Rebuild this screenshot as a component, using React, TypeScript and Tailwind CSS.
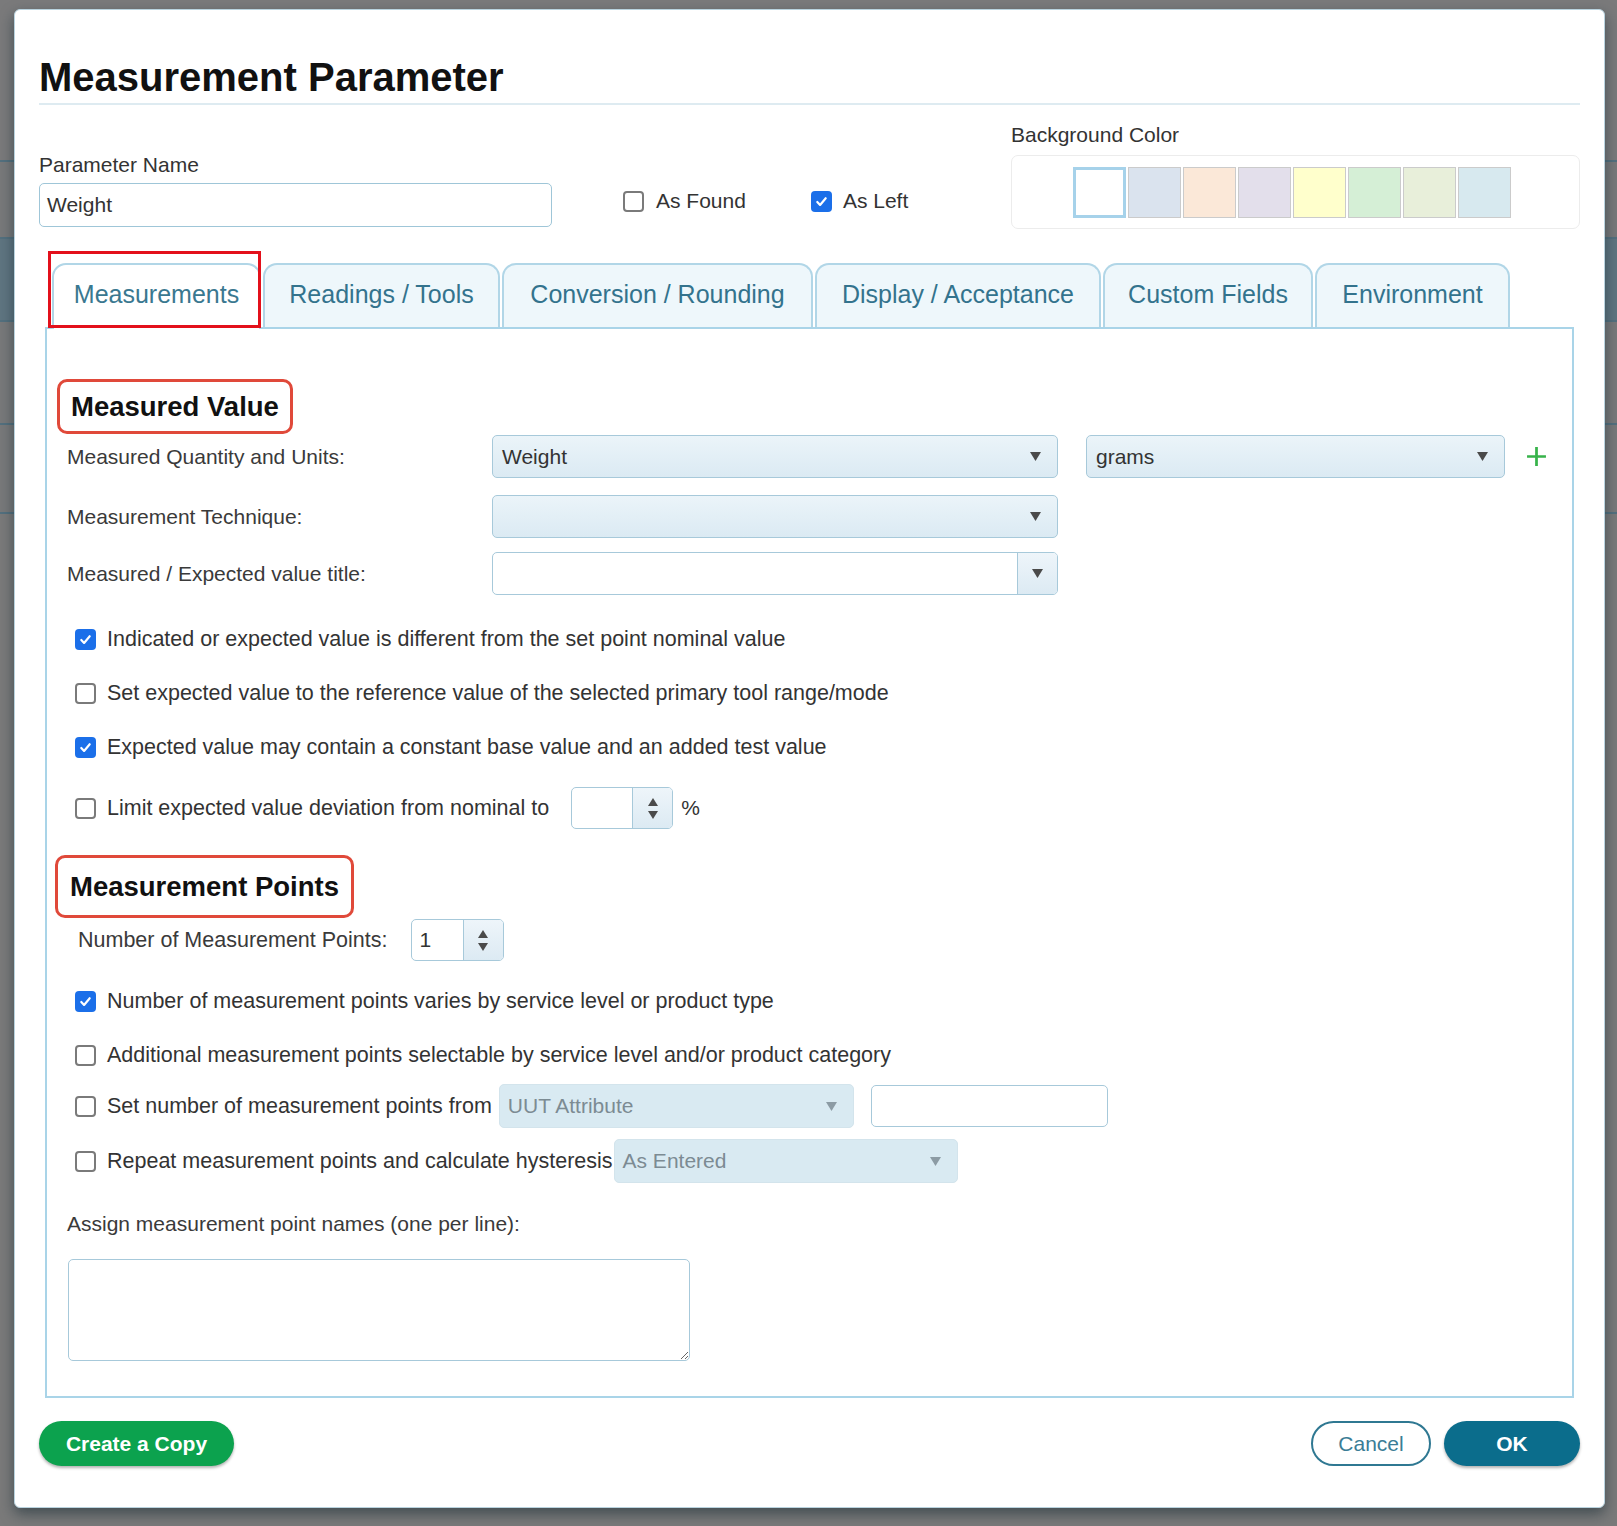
const swatches = ['#ffffff', '#dae3ee', '#fbe8d8', '#e3dfeb', '#ffffcc', '#d5efd6', '#e8efda', '#d7e9ef'];

const tabs = [
  { label: 'Measurements', w: 'w-[209px]', active: true },
  { label: 'Readings / Tools', w: 'w-[237px]' },
  { label: 'Conversion / Rounding', w: 'w-[311px]' },
  { label: 'Display / Acceptance', w: 'w-[286px]' },
  { label: 'Custom Fields', w: 'w-[210px]' },
  { label: 'Environment', w: 'w-[195px]' },
];

function Check({ checked }: { checked?: boolean }) {
  if (checked) {
    return (
      <span className="flex h-[21px] w-[21px] shrink-0 items-center justify-center rounded-[4px] bg-[#1b6fe9]">
        <svg viewBox="0 0 16 16" className="h-[15px] w-[15px]">
          <path d="M3.5 8.5l3 3.2 6-7.2" stroke="white" strokeWidth="2.3" fill="none" strokeLinecap="round" strokeLinejoin="round" />
        </svg>
      </span>
    );
  }
  return <span className="h-[21px] w-[21px] shrink-0 rounded-[4px] border-2 border-[#7a7a7a] bg-white" />;
}

function Arrow({ muted }: { muted?: boolean }) {
  return (
    <svg viewBox="0 0 10 8" className="h-[9px] w-[11px]">
      <path d="M0 0h10L5 8z" fill={muted ? '#8c9ba4' : '#4a4a4a'} />
    </svg>
  );
}

function Select({ value, w }: { value?: string; w: string }) {
  return (
    <div className={`flex h-[43px] ${w} items-center justify-between rounded-[5px] border border-[#a7c9da] bg-linear-to-b from-[#ebf4f9] to-[#dbeaf3] pl-[9px] pr-[16px] text-[#333]`}>
      <span>{value}</span>
      <Arrow />
    </div>
  );
}

function Spinner({ value, w }: { value?: string; w: string }) {
  return (
    <div className={`flex h-[42px] ${w} overflow-hidden rounded-[5px] border border-[#a7c9da] bg-white`}>
      <div className="flex flex-1 items-center pl-[8px] text-[#333]">{value}</div>
      <div className="flex w-[40px] flex-col items-center justify-center gap-[5px] border-l border-[#a7c9da] bg-linear-to-b from-[#eef5fa] to-[#dceaf3]">
        <svg viewBox="0 0 10 8" className="h-[8px] w-[10px]">
          <path d="M5 0l5 8H0z" fill="#4a4a4a" />
        </svg>
        <svg viewBox="0 0 10 8" className="h-[8px] w-[10px]">
          <path d="M0 0h10L5 8z" fill="#4a4a4a" />
        </svg>
      </div>
    </div>
  );
}

function CheckRow({ checked, label, className, children }: { checked?: boolean; label: string; className: string; children?: React.ReactNode }) {
  return (
    <div className={`flex items-center pl-[8px] ${className}`}>
      <Check checked={checked} />
      <span className="ml-[11px] text-[21.5px] text-[#333]">{label}</span>
      {children}
    </div>
  );
}

export default function App() {
  return (
    <div className="relative h-[1526px] w-[1617px] overflow-hidden bg-[#7a7a7a] font-['Liberation_Sans',Arial,sans-serif] text-[21px]">
      {/* page behind the modal overlay */}
      <div className="flex flex-col">
        <div className="h-[160px] bg-[#7a7a7b]" />
        <div className="h-[2px] bg-[#53707e]" />
        <div className="h-[75px] bg-[#78797a]" />
        <div className="h-[2px] bg-[#53707e]" />
        <div className="h-[81px] bg-[#5f7581]" />
        <div className="h-[2px] bg-[#53707e]" />
        <div className="h-[101px] bg-[#78797a]" />
        <div className="h-[2px] bg-[#53707e]" />
        <div className="h-[87px] bg-[#78797a]" />
        <div className="h-[2px] bg-[#53707e]" />
      </div>

      <div className="absolute left-[14px] top-[9px] w-[1591px] rounded-[6px] border border-[#b9d3df] bg-white px-[24px] pb-[41px] pt-[43px] shadow-[0_6px_14px_rgba(20,40,50,0.55)]">
        <h1 className="text-[40px] font-bold leading-[48px] text-[#111]">Measurement Parameter</h1>
        <div className="mt-[2px] h-[2px] bg-[#deebf1]" />

        <div className="flex items-start">
          <div className="mt-[48px] w-[513px]">
            <div className="leading-[24px] text-[#333]">Parameter Name</div>
            <div className="mt-[6px] flex h-[44px] items-center rounded-[5px] border border-[#9fc6d8] pl-[7px] text-[#333]">Weight</div>
          </div>
          <div className="ml-[71px] mt-[84px] flex h-[24px] items-center">
            <Check />
            <span className="ml-[12px] text-[#333]">As Found</span>
            <span className="ml-[65px]">
              <Check checked />
            </span>
            <span className="ml-[11px] text-[#333]">As Left</span>
          </div>
          <div className="ml-auto mt-[18px] w-[569px]">
            <div className="leading-[24px] text-[#333]">Background Color</div>
            <div className="mt-[8px] flex h-[74px] items-center justify-center gap-[2px] rounded-[7px] border border-[#ececec] pr-[8px]">
              {swatches.map((c, i) => (
                <div
                  key={c}
                  className={i === 0 ? 'h-[51px] w-[53px] border-[3px] border-[#a6d2ea]' : 'h-[51px] w-[53px] border-[1.5px] border-[#cbcbcb]'}
                  style={{ backgroundColor: c }}
                />
              ))}
            </div>
          </div>
        </div>

        <div className="mx-[6px] mt-[34px]">
          <div className="flex items-end gap-[2px] pl-[7px]">
            {tabs.map((t) =>
              t.active ? (
                <div key={t.label} className={`relative z-10 -mb-[2px] flex h-[66px] ${t.w} items-center justify-center rounded-t-[14px] border-2 border-b-0 border-[#b1d6e7] bg-white pb-[5px] text-[25px] text-[#3a7890]`}>
                  {t.label}
                  <div className="pointer-events-none absolute -left-[6px] -top-[14px] h-[77px] w-[213px] border-[3px] border-[#e3101b]" />
                </div>
              ) : (
                <div key={t.label} className={`flex h-[64px] ${t.w} items-center justify-center rounded-t-[14px] border-2 border-b-0 border-[#b1d6e7] bg-[#eef7fb] pb-[3px] text-[25px] text-[#33738d]`}>
                  {t.label}
                </div>
              )
            )}
          </div>

          <div className="flex flex-col border-2 border-[#a9d4e8] px-[20px] pb-[35px] pt-[50px]">
            <div className="-ml-[10px] flex h-[55px] w-fit items-center rounded-[10px] border-[3px] border-[#e0493a] px-[11px] text-[27.5px] font-bold text-[#111]">
              Measured Value
            </div>

            <div className="mt-[1px] flex h-[43px] items-center">
              <span className="w-[425px] text-[#3a3a3a]">Measured Quantity and Units:</span>
              <Select value="Weight" w="w-[566px]" />
              <span className="ml-[28px]">
                <Select value="grams" w="w-[419px]" />
              </span>
              <svg viewBox="0 0 20 20" className="ml-[21px] h-[21px] w-[21px]">
                <path d="M10 1v18M1 10h18" stroke="#37b34a" strokeWidth="2.6" />
              </svg>
            </div>

            <div className="mt-[17px] flex h-[43px] items-center">
              <span className="w-[425px] text-[#3a3a3a]">Measurement Technique:</span>
              <Select w="w-[566px]" />
            </div>

            <div className="mt-[14px] flex h-[43px] items-center">
              <span className="w-[425px] text-[#3a3a3a]">Measured / Expected value title:</span>
              <div className="flex h-[43px] w-[566px] overflow-hidden rounded-[5px] border border-[#a7c9da] bg-white">
                <div className="flex-1" />
                <div className="flex w-[40px] items-center justify-center border-l border-[#a7c9da] bg-linear-to-b from-[#eef5fa] to-[#dceaf3]">
                  <Arrow />
                </div>
              </div>
            </div>

            <CheckRow checked label="Indicated or expected value is different from the set point nominal value" className="mt-[23px] h-[42px]" />
            <CheckRow label="Set expected value to the reference value of the selected primary tool range/mode" className="mt-[12px] h-[42px]" />
            <CheckRow checked label="Expected value may contain a constant base value and an added test value" className="mt-[12px] h-[42px]" />
            <CheckRow label="Limit expected value deviation from nominal to" className="mt-[19px] h-[42px]">
              <span className="ml-[22px]">
                <Spinner w="w-[102px]" />
              </span>
              <span className="ml-[8px] text-[#333]">%</span>
            </CheckRow>

            <div className="-ml-[12px] mt-[26px] flex h-[63px] w-fit items-center rounded-[10px] border-[3px] border-[#e0493a] px-[12px] text-[27.5px] font-bold text-[#111]">
              Measurement Points
            </div>

            <div className="mt-[1px] flex h-[42px] items-center pl-[11px]">
              <span className="text-[21.5px] text-[#3a3a3a]">Number of Measurement Points:</span>
              <span className="ml-[23px]">
                <Spinner value="1" w="w-[93px]" />
              </span>
            </div>

            <CheckRow checked label="Number of measurement points varies by service level or product type" className="mt-[19px] h-[42px]" />
            <CheckRow label="Additional measurement points selectable by service level and/or product category" className="mt-[12px] h-[42px]" />
            <CheckRow label="Set number of measurement points from" className="mt-[8px] h-[44px]">
              <div className="ml-[7px] flex h-[44px] w-[355px] items-center justify-between rounded-[5px] border border-[#d3e4ec] bg-[#d9eaf2] pl-[8px] pr-[16px] text-[#7c8b93]">
                <span>UUT Attribute</span>
                <Arrow muted />
              </div>
              <div className="ml-[17px] h-[42px] w-[237px] rounded-[5px] border border-[#a7c9da] bg-white" />
            </CheckRow>
            <CheckRow label="Repeat measurement points and calculate hysteresis" className="mt-[11px] h-[44px]">
              <div className="ml-[1px] flex h-[44px] w-[344px] items-center justify-between rounded-[5px] border border-[#d3e4ec] bg-[#d9eaf2] pl-[8px] pr-[16px] text-[#7c8b93]">
                <span>As Entered</span>
                <Arrow muted />
              </div>
            </CheckRow>

            <div className="mt-[29px] leading-[24px] text-[#3a3a3a]">Assign measurement point names (one per line):</div>
            <textarea className="ml-[1px] mt-[23px] h-[102px] w-[622px] rounded-[5px] border border-[#a7c9da] bg-white outline-none" />
          </div>
        </div>

        <div className="mt-[23px] flex items-center">
          <button className="flex h-[45px] w-[195px] items-center justify-center rounded-full bg-[#0ca24e] font-bold text-white shadow-[0_2px_3px_rgba(0,0,0,0.3)]">
            Create a Copy
          </button>
          <button className="ml-auto flex h-[45px] w-[120px] items-center justify-center rounded-full border-2 border-[#2f7892] bg-white text-[#3b7d96]">
            Cancel
          </button>
          <button className="ml-[13px] flex h-[45px] w-[136px] items-center justify-center rounded-full bg-[#0b6d8c] font-bold text-white shadow-[0_2px_3px_rgba(0,0,0,0.3)]">
            OK
          </button>
        </div>
      </div>
    </div>
  );
}
